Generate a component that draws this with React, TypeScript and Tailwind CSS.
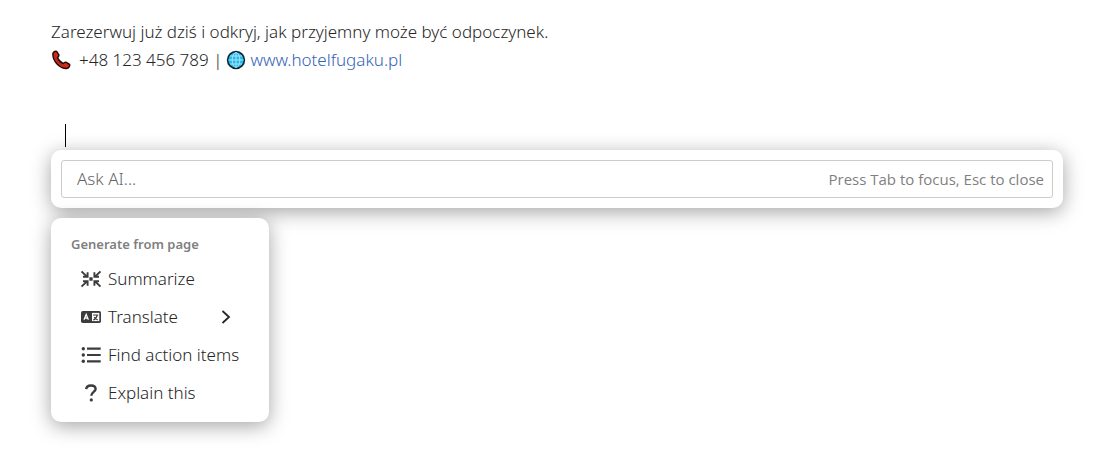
import React, { useState } from 'react';

interface MenuItem {
  label: string;
  icon: React.ReactNode;
  hasSubmenu?: boolean;
}

const PhoneIcon = () => (
  <svg width="20" height="20" viewBox="0 0 20 20" aria-hidden="true">
    <path
      d="M2 3.2C3 1.6 4.6 1 5.6 1.4L7.7 4.6C8.2 5.6 7.9 6.4 6.4 7.6C7.4 10 9.6 12.3 12.3 13.6C13.4 12.2 14.3 11.9 15.3 12.4L18.6 14.5C19.1 16 17.6 18.2 15.6 18.5C8.5 18.4 1.2 10.8 2 3.2Z"
      fill="#d92b1c"
      stroke="#260b09"
      strokeWidth="1.5"
      strokeLinejoin="round"
    />
    <path d="M4 4.5C4 10 9 15.6 15 16.4" fill="none" stroke="#c4241a" strokeWidth="1.2" />
  </svg>
);

const GlobeIcon = () => (
  <svg width="20" height="20" viewBox="0 0 20 20" aria-hidden="true">
    <circle cx="10" cy="10" r="8.4" fill="#25b7ec" stroke="#0d2630" strokeWidth="1.6" />
    <g fill="none" stroke="#a5e6f9" strokeWidth="1">
      <path d="M10 2.5V17.5M2.5 10H17.5M4 6H16M4 14H16" />
      <ellipse cx="10" cy="10" rx="3.8" ry="7.4" />
    </g>
  </svg>
);

const SummarizeIcon = () => (
  <svg width="20" height="18" viewBox="0 0 20 18" aria-hidden="true">
    <g fill="none" stroke="currentColor" strokeWidth="1.9">
      <path d="M0.5 1.5L5.8 6.4M2 6.8H6.6V2.2" />
      <path d="M19.5 1.5L14.2 6.4M18 6.8H13.4V2.2" />
      <path d="M0.5 16.5L5.8 11.6M2 11.2H6.6V15.8" />
      <path d="M19.5 16.5L14.2 11.6M18 11.2H13.4V15.8" />
    </g>
    <rect x="8.3" y="7.3" width="3.4" height="3.4" rx="0.6" fill="currentColor" />
  </svg>
);

const TranslateIcon = () => (
  <svg width="20" height="12" viewBox="0 0 20 12" aria-hidden="true">
    <rect width="20" height="12" rx="1.8" fill="currentColor" />
    <rect x="11" y="1.9" width="7.3" height="8.2" fill="#fff" />
    <path d="M3 8.8L5.2 3.4L7.4 8.8M3.8 7.1H6.6" fill="none" stroke="#fff" strokeWidth="1.2" />
    <g fill="none" stroke="currentColor" strokeWidth="1.1">
      <path d="M12 4H17.2M16.3 4C15.6 6.5 14.4 8.3 12.2 9M13.2 6C13.8 7.3 15 8.5 16.9 9" />
    </g>
  </svg>
);

const ListIcon = () => (
  <svg width="20" height="18" viewBox="0 0 20 18" aria-hidden="true">
    <g fill="currentColor">
      <circle cx="2.3" cy="2.7" r="1.7" />
      <circle cx="2.3" cy="9" r="1.7" />
      <circle cx="2.3" cy="15.3" r="1.7" />
    </g>
    <path d="M6 2.7H19.7M6 9H19.7M6 15.3H19.7" stroke="currentColor" strokeWidth="2.2" />
  </svg>
);

const QuestionIcon = () => (
  <svg width="20" height="18" viewBox="0 0 20 18" aria-hidden="true">
    <path
      d="M5.2 5.2C5.4 2.6 7.3 1.5 10 1.5C12.7 1.5 14.6 2.8 14.6 5C14.6 8 10.3 7.8 10.3 11.8"
      fill="none"
      stroke="currentColor"
      strokeWidth="2.4"
    />
    <circle cx="10.3" cy="15.9" r="1.6" fill="currentColor" />
  </svg>
);

const ChevronIcon = () => (
  <svg width="10" height="16" viewBox="0 0 10 16" aria-hidden="true">
    <path d="M1.5 2L8 8L1.5 14" fill="none" stroke="currentColor" strokeWidth="1.8" />
  </svg>
);

const MENU_ITEMS: MenuItem[] = [
  { label: 'Summarize', icon: <SummarizeIcon /> },
  { label: 'Translate', icon: <TranslateIcon />, hasSubmenu: true },
  { label: 'Find action items', icon: <ListIcon /> },
  { label: 'Explain this', icon: <QuestionIcon /> },
];

const PageText = () => (
  <div className="leading-7">
    <p>Zarezerwuj już dziś i odkryj, jak przyjemny może być odpoczynek.</p>
    <p className="flex items-center gap-1">
      <span className="flex items-center gap-2">
        <PhoneIcon />
        +48 123 456 789 |
      </span>
      <GlobeIcon />
      <a href="#" className="text-[#3463b8] hover:underline">www.hotelfugaku.pl</a>
    </p>
  </div>
);

const AskBar: React.FC<{ value: string; onChange: (value: string) => void }> = ({ value, onChange }) => (
  <div className="rounded-[10px] bg-white p-2.5 shadow-[0_4px_20px_rgba(0,0,0,0.36)]">
    <div className="flex h-[38px] items-center rounded-[3px] border border-[#cccccc] pr-2 pl-[15px]">
      <input
        type="text"
        aria-label="Ask AI"
        aria-describedby="ask-hint"
        placeholder="Ask AI..."
        value={value}
        onChange={(e) => onChange(e.target.value)}
        className="min-w-0 flex-1 bg-transparent outline-none placeholder:text-[#666666]"
      />
      <span id="ask-hint" className="font-['Open_Sans',sans-serif] text-[15px] font-normal text-[#7f7f7f]">
        Press Tab to focus, Esc to close
      </span>
    </div>
  </div>
);

const ActionMenu = () => (
  <div className="w-fit rounded-[10px] bg-white p-2.5 shadow-[0_4px_20px_rgba(0,0,0,0.36)]">
    <h2 className="px-2.5 py-1.5 text-[13px] leading-5 font-semibold text-[#7f7f7f]">Generate from page</h2>
    <ul>
      {MENU_ITEMS.map(({ label, icon, hasSubmenu }) => (
        <li key={label}>
          <button className="flex h-[38px] w-full items-center gap-[7px] rounded px-5 hover:bg-gray-100">
            <span className="flex w-5 justify-center text-[#3c3c3c]">{icon}</span>
            <span>{label}</span>
            {hasSubmenu && <span className="ml-auto pr-2"><ChevronIcon /></span>}
          </button>
        </li>
      ))}
    </ul>
  </div>
);

const App: React.FC = () => {
  const [prompt, setPrompt] = useState('');

  return (
    <main className="min-h-screen bg-white pt-[18px] pr-[43px] pb-10 pl-[51px] font-['Noto_Sans',sans-serif] text-[17px] font-light text-[#262626]">
      <PageText />
      <div className="mt-[50px] mb-[3px] ml-3.5 h-[23px] w-px bg-black" />
      <div className="flex flex-col gap-2.5">
        <AskBar value={prompt} onChange={setPrompt} />
        <ActionMenu />
      </div>
    </main>
  );
};

export default App;
